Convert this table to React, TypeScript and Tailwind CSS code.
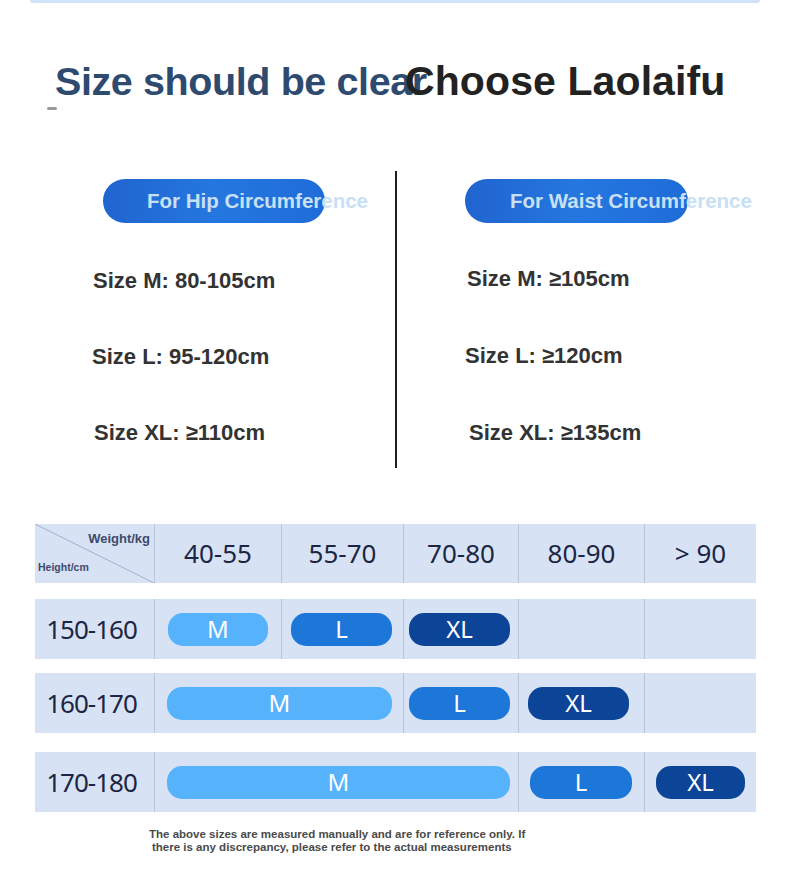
import React from "react";

const sans = { fontFamily: '"Liberation Sans", Arial, sans-serif' };
const noto = { fontFamily: '"Noto Sans", "Open Sans", sans-serif' };

function Pill({ label, cls }: { label: string; cls: string }) {
  return (
    <div
      className={`h-[33px] rounded-[15px] flex items-center justify-center text-white text-[24px] leading-none ${cls}`}
      style={noto}
    >
      {label}
    </div>
  );
}

const M = "bg-[#56b2fb]";
const L = "bg-[#1c77d9]";
const XL = "bg-[#0c4598]";

function RowLabel({ text }: { text: string }) {
  return (
    <div
      className="flex items-center justify-center pr-[6px] text-[26px] tracking-[-1px] text-[#1c2644]"
      style={noto}
    >
      {text}
    </div>
  );
}

const cols = "grid grid-cols-[119px_127px_122px_115px_126px_112px]";

export default function App() {
  return (
    <div className="w-[790px] h-[875px] bg-white overflow-hidden relative" style={sans}>
      {/* top strip */}
      <div className="mx-[30px] h-[3px] bg-[#cfe2f7] rounded-b-full" />

      {/* title */}
      <div className="mt-[58px] flex items-baseline whitespace-nowrap font-bold leading-none">
        <span className="ml-[55px] w-[350px] text-[39.5px] text-[#2e4a6f] tracking-[-0.4px]">
          Size should be clear
        </span>
        <span className="text-[41px] text-[#222222] tracking-[0.1px]">Choose Laolaifu</span>
      </div>
      <div className="ml-[47px] mt-[5px] w-[10px] h-[3px] rounded-full bg-[#9a9a9a]" />

      {/* two columns */}
      <div className="mt-[61px] h-[297px] flex">
        <div className="w-[395px] pl-[103px] pt-[8px]">
          <div className="w-[222px] h-[44px] rounded-full bg-gradient-to-r from-[#2064cf] via-[#2577e0] to-[#1f6cd9] flex items-center pl-[44px] whitespace-nowrap">
            <span className="text-[20.5px] font-bold text-[#c8e0f3] leading-none">For Hip Circumference</span>
          </div>
          <div className="-ml-[10px] mt-[47px] flex flex-col gap-[54px] text-[22px] font-bold text-[#333333] leading-none">
            <div>Size M: 80-105cm</div>
            <div className="-ml-[1px]">Size L: 95-120cm</div>
            <div className="ml-[1px]">Size XL: ≥110cm</div>
          </div>
        </div>
        <div className="w-[2px] bg-[#1e1e1e]" />
        <div className="flex-1 pl-[68px] pt-[8px]">
          <div className="w-[223px] h-[44px] rounded-full bg-gradient-to-r from-[#2064cf] via-[#2577e0] to-[#1f6cd9] flex items-center pl-[45px] whitespace-nowrap">
            <span className="text-[20.5px] font-bold text-[#c8e0f3] leading-none">For Waist Circumference</span>
          </div>
          <div className="ml-[2px] mt-[45px] flex flex-col gap-[55px] text-[22px] font-bold text-[#333333] leading-none">
            <div>Size M: ≥105cm</div>
            <div className="-ml-[2px]">Size L: ≥120cm</div>
            <div className="ml-[2px]">Size XL: ≥135cm</div>
          </div>
        </div>
      </div>

      {/* table */}
      <div className="ml-[35px] mt-[56px] w-[721px]">
        {/* header */}
        <div className={`${cols} h-[59px] bg-[#d7e3f4]`}>
          <div className="relative">
            <svg className="absolute inset-0" width="119" height="59">
              <line x1="0" y1="0" x2="119" y2="59" stroke="#9fb0c8" strokeWidth="1" />
            </svg>
            <div className="absolute right-[4px] top-[5px] text-[13px] font-bold text-[#3e4a6c]">Weight/kg</div>
            <div className="absolute left-[3px] top-[36px] text-[10.5px] font-bold text-[#3e4a6c]">Height/cm</div>
          </div>
          {["40-55", "55-70", "70-80", "80-90", "> 90"].map((t) => (
            <div
              key={t}
              className="border-l border-[#b7c5d8] flex items-center justify-center text-[26px] text-[#1c2644]"
              style={noto}
            >
              {t}
            </div>
          ))}
        </div>

        {/* row 1 */}
        <div className={`${cols} mt-[16px] h-[60px] bg-[#d7e3f4]`}>
          <RowLabel text="150-160" />
          <div className="border-l border-[#b7c5d8] flex items-center pl-[13px] pr-[13px]">
            <div className="w-full"><Pill label="M" cls={M} /></div>
          </div>
          <div className="border-l border-[#b7c5d8] flex items-center pl-[9px] pr-[11px]">
            <div className="w-full"><Pill label="L" cls={L} /></div>
          </div>
          <div className="border-l border-[#b7c5d8] flex items-center pl-[5px] pr-[8px]">
            <div className="w-full"><Pill label="XL" cls={XL} /></div>
          </div>
          <div className="border-l border-[#b7c5d8]" />
          <div className="border-l border-[#b7c5d8]" />
        </div>

        {/* row 2 */}
        <div className={`${cols} mt-[14px] h-[60px] bg-[#d7e3f4]`}>
          <RowLabel text="160-170" />
          <div className="col-span-2 border-l border-[#b7c5d8] flex items-center pl-[12px] pr-[11px]">
            <div className="w-full"><Pill label="M" cls={M} /></div>
          </div>
          <div className="border-l border-[#b7c5d8] flex items-center pl-[5px] pr-[8px]">
            <div className="w-full"><Pill label="L" cls={L} /></div>
          </div>
          <div className="border-l border-[#b7c5d8] flex items-center pl-[9px] pr-[15px]">
            <div className="w-full"><Pill label="XL" cls={XL} /></div>
          </div>
          <div className="border-l border-[#b7c5d8]" />
        </div>

        {/* row 3 */}
        <div className={`${cols} mt-[19px] h-[60px] bg-[#d7e3f4]`}>
          <RowLabel text="170-180" />
          <div className="col-span-3 border-l border-[#b7c5d8] flex items-center pl-[12px] pr-[8px]">
            <div className="w-full"><Pill label="M" cls={M} /></div>
          </div>
          <div className="border-l border-[#b7c5d8] flex items-center pl-[11px] pr-[12px]">
            <div className="w-full"><Pill label="L" cls={L} /></div>
          </div>
          <div className="border-l border-[#b7c5d8] flex items-center pl-[11px] pr-[11px]">
            <div className="w-full"><Pill label="XL" cls={XL} /></div>
          </div>
        </div>
      </div>

      {/* footnote */}
      <div className="mt-[16px] ml-[149px] text-[11.5px] leading-[13px] font-bold text-[#4a4a4a]">
        <div>The above sizes are measured manually and are for reference only. If</div>
        <div className="ml-[3px]">there is any discrepancy, please refer to the actual measurements</div>
      </div>
    </div>
  );
}
